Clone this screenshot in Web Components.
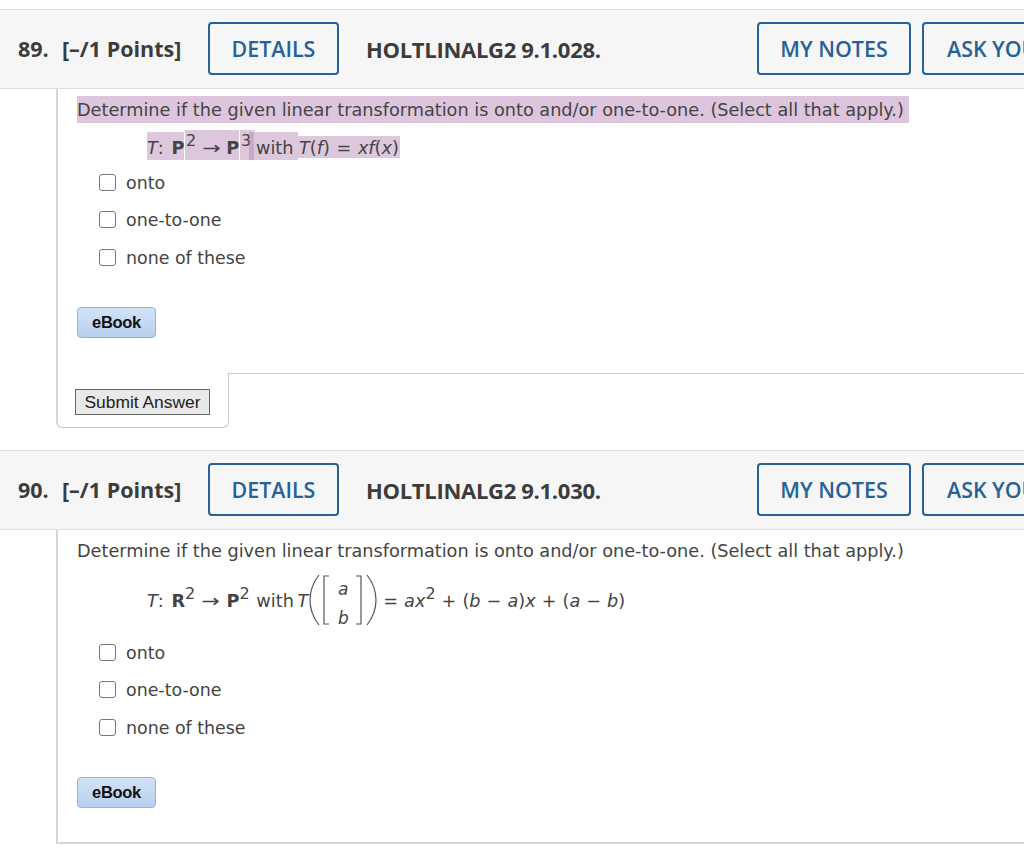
<!DOCTYPE html>
<html>
<head>
<meta charset="utf-8">
<title>Questions</title>
<style>
  html, body { margin: 0; padding: 0; background: #fff; overflow: hidden; }
  body { width: 1024px; height: 849px; padding-top: 9px; box-sizing: border-box; }
</style>
</head>
<body>

<question-block number="89." code="HOLTLINALG2 9.1.028." submit>
  <highlight-line mark>Determine if the given linear transformation is onto and/or one-to-one. (Select all that apply.)</highlight-line>
  <math-one></math-one>
  <choice-list></choice-list>
</question-block>

<question-block number="90." code="HOLTLINALG2 9.1.030." style="margin-top:22px">
  <highlight-line>Determine if the given linear transformation is onto and/or one-to-one. (Select all that apply.)</highlight-line>
  <math-two></math-two>
  <choice-list></choice-list>
</question-block>

<script>
const BODY_FONT = `"DejaVu Sans", Verdana, sans-serif`;
const BODY_SIZE = '17.68px';

class OutlineButton extends HTMLElement {
  constructor() {
    super();
    this.attachShadow({ mode: 'open' });
    this.shadowRoot.innerHTML = `
      <style>
        :host {
          display: inline-flex;
          flex: none;
          box-sizing: border-box;
          height: 53px;
          align-items: center;
          justify-content: center;
          border: 2px solid #266297;
          border-radius: 4px;
          color: #266297;
          font: 600 21.4px "Open Sans", sans-serif;
          white-space: nowrap;
        }
      </style>
      <slot></slot>
    `;
  }
}

class QuestionHeader extends HTMLElement {
  constructor() {
    super();
    this.attachShadow({ mode: 'open' });
    this.shadowRoot.innerHTML = `
      <style>
        :host {
          display: flex;
          box-sizing: border-box;
          height: 80px;
          align-items: center;
          background: #f6f6f6;
          border-top: 1px solid #dfdfdf;
          border-bottom: 1px solid #dfdfdf;
          padding: 0 0 1px 18px;
          overflow: hidden;
          color: #3c3c3c;
          font: 700 21.5px "Open Sans", sans-serif;
          white-space: nowrap;
        }
        span { flex: none; }
        .num { width: 44px; }
        .pts { width: 146px; }
        .code { width: 391px; margin-left: 27px; font-size: 22px; letter-spacing: -0.3px; }
      </style>
      <span class="num"></span>
      <span class="pts">[–/1 Points]</span>
      <outline-button style="width:131px">DETAILS</outline-button>
      <span class="code"></span>
      <outline-button style="width:154px">MY NOTES</outline-button>
      <outline-button style="width:140px;margin-left:11px;justify-content:flex-start;padding-left:23px;border-right:0;border-radius:4px 0 0 4px">ASK YOUR TEACHER</outline-button>
    `;
    this.shadowRoot.querySelector('.num').textContent = this.getAttribute('number');
    this.shadowRoot.querySelector('.code').textContent = this.getAttribute('code');
  }
}

class HighlightLine extends HTMLElement {
  constructor() {
    super();
    this.attachShadow({ mode: 'open' });
    this.shadowRoot.innerHTML = `
      <style>
        :host { display: block; }
        div {
          display: inline-block;
          height: 27px;
          padding: 0 5px 0 0;
          font: ${BODY_SIZE}/29px ${BODY_FONT};
          white-space: nowrap;
        }
        :host([mark]) div { background: #dcc5dd; }
      </style>
      <div><slot></slot></div>
    `;
  }
}

const MATH_BITS = `
  sup { font-size: 16px; line-height: 0; vertical-align: 8px; }
  i { font-style: oblique; }
  .arrow { display: inline-block; transform: scaleX(1.25); margin: 0 2px; }
`;

class MathOne extends HTMLElement {
  constructor() {
    super();
    this.attachShadow({ mode: 'open' });
    this.shadowRoot.innerHTML = `
      <style>
        :host {
          display: flex;
          margin: 7px 0 -3px 70px;
          height: 30px;
          font: ${BODY_SIZE} ${BODY_FONT};
          white-space: nowrap;
          align-items: flex-start;
        }
        ${MATH_BITS}
        .m { display: block; flex: none; box-sizing: border-box; background: rgba(180, 130, 180, 0.45); }
        .a { width: 37px; height: 28px; margin-top: 2px; line-height: 32px; word-spacing: 2px; }
        .b { width: 54px; height: 30px; margin-left: 1px; line-height: 36px; padding-left: 1px; }
        .c { width: 14px; height: 30px; margin-left: 1px; line-height: 36px; padding-left: 1px; }
        .d { width: 49px; height: 28px; margin: 2px 0 0 -5px; line-height: 32px; padding-left: 7px; }
        .e { width: 102px; height: 22px; margin-top: 6px; line-height: 24px; padding-left: 1px; word-spacing: 1px; }
      </style>
      <span class="m a"><i>T</i>: <b>P</b></span>
      <span class="m b"><sup>2</sup> <span class="arrow">→</span> <b>P</b></span>
      <span class="m c"><sup>3</sup></span>
      <span class="m d">with</span>
      <span class="m e"><i>T</i>(<i>f</i>) = <i>xf</i>(<i>x</i>)</span>
    `;
  }
}

class MathTwo extends HTMLElement {
  constructor() {
    super();
    this.attachShadow({ mode: 'open' });
    this.shadowRoot.innerHTML = `
      <style>
        :host {
          display: flex;
          margin: 8px 0 0 70px;
          height: 55px;
          align-items: center;
          font: ${BODY_SIZE} ${BODY_FONT};
          white-space: nowrap;
        }
        ${MATH_BITS}
        .matrix {
          display: grid;
          grid-template-rows: 29px 29px;
          justify-items: center;
          align-items: center;
          width: 14px;
          margin-top: 7px;
          font-size: 17px;
          font-style: oblique;
        }
        .t { padding-top: 2px; }
        svg { display: block; flex: none; }
      </style>
      <span class="t"><i>T</i>: <b style="margin-left:2px">R</b><sup>2</sup> <span class="arrow" style="margin:0 2px">→</span><b style="margin-left:7px">P</b><sup style="margin-right:1px">2</sup> with <i style="margin-left:-2px">T</i></span>
      <svg width="11" height="52" viewBox="0 0 11 52" style="margin-left:1px"><path d="M10 1 C3 10 1 18 1 26 C1 34 3 42 10 51" fill="none" stroke="#555" stroke-width="1.2"/></svg>
      <svg width="8" height="52" viewBox="0 0 8 52" style="margin-left:2px"><path d="M7 2 H2 V50 H7" fill="none" stroke="#555" stroke-width="1.2"/></svg>
      <span class="matrix" style="margin-left:6px"><span>a</span><span>b</span></span>
      <svg width="8" height="52" viewBox="0 0 8 52" style="margin-left:5px"><path d="M1 2 H6 V50 H1" fill="none" stroke="#555" stroke-width="1.2"/></svg>
      <svg width="11" height="52" viewBox="0 0 11 52" style="margin-left:3px"><path d="M1 1 C8 10 10 18 10 26 C10 34 8 42 1 51" fill="none" stroke="#555" stroke-width="1.2"/></svg>
      <span class="t" style="margin-left:6px;word-spacing:0.4px">= <i>ax</i><sup>2</sup> + (<i>b</i> − <i>a</i>)<i>x</i> + (<i>a</i> − <i>b</i>)</span>
    `;
  }
}

class ChoiceList extends HTMLElement {
  constructor() {
    super();
    this.attachShadow({ mode: 'open' });
    this.shadowRoot.innerHTML = `
      <style>
        :host {
          display: grid;
          grid-auto-rows: 37.5px;
          margin: 7px 0 0 22px;
          font: 17.4px ${BODY_FONT};
        }
        label { display: flex; align-items: center; gap: 10px; white-space: nowrap; }
        .box {
          box-sizing: border-box;
          width: 17px;
          height: 17px;
          margin-top: -1px;
          background: #fff;
          border: 1.5px solid #767676;
          border-radius: 3px;
        }
      </style>
      <label><span class="box"></span>onto</label>
      <label><span class="box"></span>one-to-one</label>
      <label><span class="box"></span>none of these</label>
    `;
  }
}

class EbookButton extends HTMLElement {
  constructor() {
    super();
    this.attachShadow({ mode: 'open' });
    this.shadowRoot.innerHTML = `
      <style>
        :host {
          display: flex;
          box-sizing: border-box;
          width: 79px;
          height: 31px;
          align-items: center;
          justify-content: center;
          background: linear-gradient(#d3e3f7, #b6cfee);
          border: 1px solid #93b3da;
          border-radius: 4px;
          color: #111;
          font: 700 16.5px "Liberation Sans", Arial, sans-serif;
          letter-spacing: -0.3px;
        }
      </style>
      <slot></slot>
    `;
  }
}

class SubmitFooter extends HTMLElement {
  constructor() {
    super();
    this.attachShadow({ mode: 'open' });
    this.shadowRoot.innerHTML = `
      <style>
        :host { display: flex; height: 55px; }
        .tab {
          box-sizing: border-box;
          flex: none;
          width: 173px;
          border: 1px solid #c8c8c8;
          border-left: 2px solid #d6d6d6;
          border-top: 0;
          border-radius: 0 0 6px 6px;
          padding: 16px 0 0 17px;
        }
        .rest { flex: 1; border-top: 1px solid #c8c8c8; }
        .btn {
          box-sizing: border-box;
          display: flex;
          width: 135px;
          height: 26px;
          align-items: center;
          justify-content: center;
          background: #e9e9e9;
          border: 1px solid #666;
          color: #222;
          font: 17.4px "Liberation Sans", Arial, sans-serif;
          white-space: nowrap;
        }
      </style>
      <div class="tab"><div class="btn">Submit Answer</div></div>
      <div class="rest"></div>
    `;
  }
}

class QuestionBlock extends HTMLElement {
  constructor() {
    super();
    const hasSubmit = this.hasAttribute('submit');
    this.attachShadow({ mode: 'open' });
    this.shadowRoot.innerHTML = `
      <style>
        :host { display: block; color: #444; }
        .body {
          box-sizing: border-box;
          margin-left: 56px;
          padding: 7px 0 0 19px;
          border-left: 2px solid #d6d6d6;
        }
        .plain { height: 314px; border-bottom: 2px solid #d6d6d6; }
        .withsubmit { height: 284px; }
        .foot { margin-left: 56px; }
        ebook-button { margin-top: 30px; }
      </style>
      <question-header number="${this.getAttribute('number')}" code="${this.getAttribute('code')}"></question-header>
      <div class="body ${hasSubmit ? 'withsubmit' : 'plain'}">
        <slot></slot>
        <ebook-button>eBook</ebook-button>
      </div>
      ${hasSubmit ? '<div class="foot"><submit-footer></submit-footer></div>' : ''}
    `;
  }
}

customElements.define('outline-button', OutlineButton);
customElements.define('question-header', QuestionHeader);
customElements.define('highlight-line', HighlightLine);
customElements.define('math-one', MathOne);
customElements.define('math-two', MathTwo);
customElements.define('choice-list', ChoiceList);
customElements.define('ebook-button', EbookButton);
customElements.define('submit-footer', SubmitFooter);
customElements.define('question-block', QuestionBlock);
</script>
</body>
</html>
